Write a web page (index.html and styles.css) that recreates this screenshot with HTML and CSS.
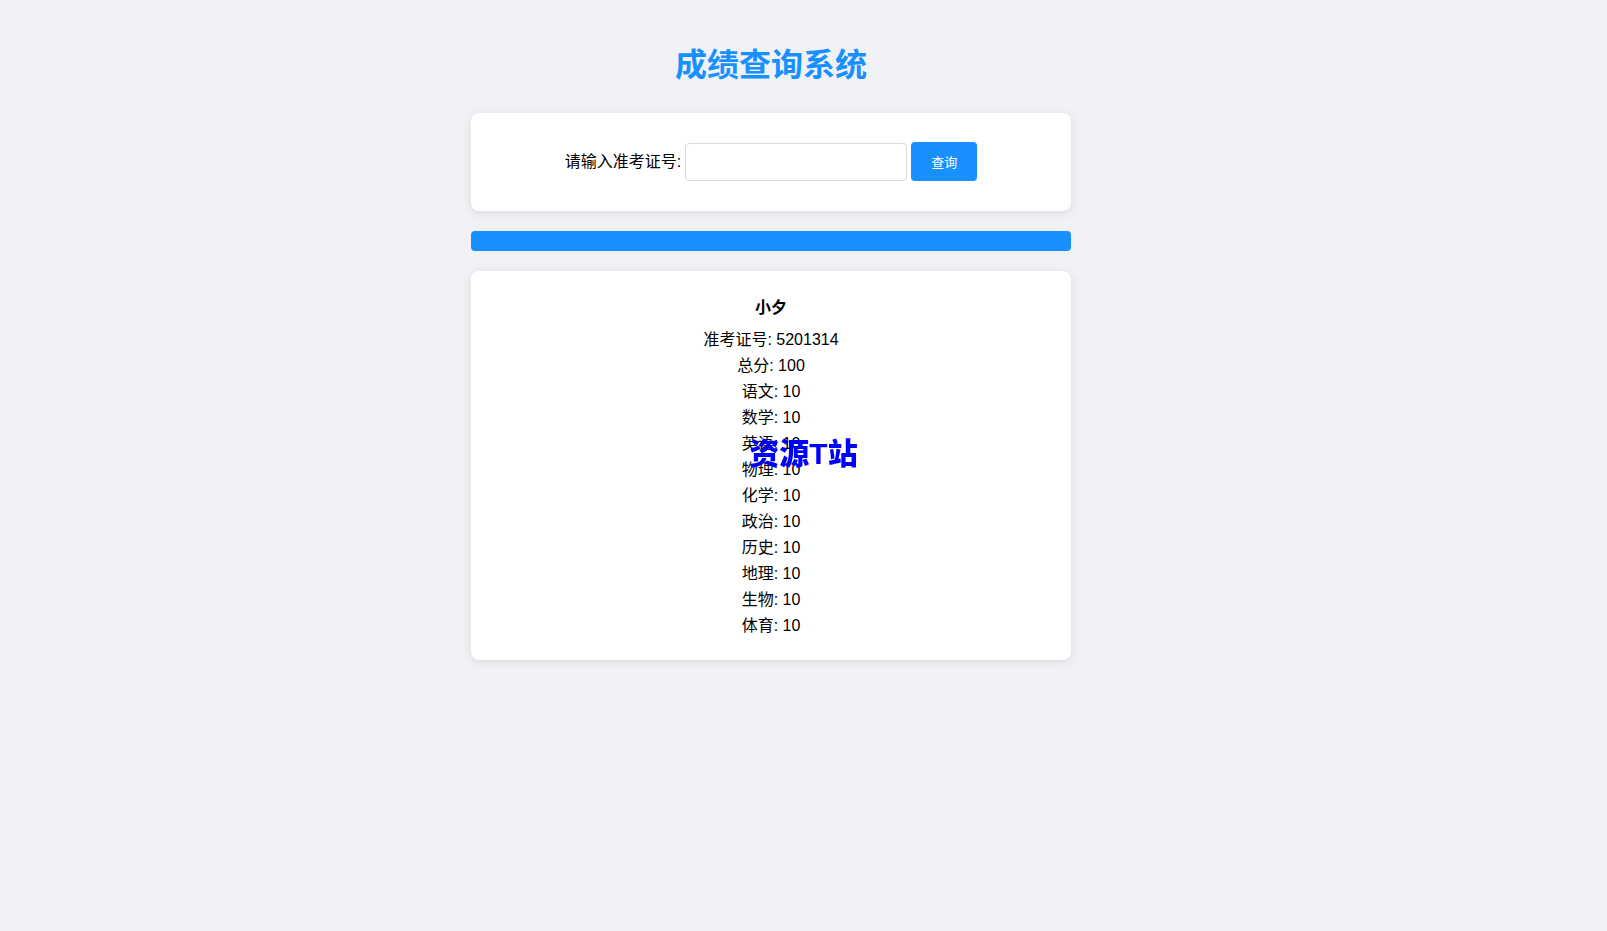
FILE: index.html
```html
<!DOCTYPE html>
<html lang="zh-CN">
<head>
  <meta charset="UTF-8">
  <meta name="viewport" content="width=device-width, initial-scale=1.0">
  <title>成绩查询系统</title>
  <link rel="stylesheet" href="styles.css">
</head>
<body>
  <div class="container">
    <h1>成绩查询系统</h1>
    <form class="card search-form">
      <label for="examId">请输入准考证号:</label>
      <input type="text" id="examId" name="examId">
      <button type="submit">查询</button>
    </form>
    <div class="bar"></div>
    <div class="card result">
      <h2 class="name">小夕</h2>
      <p>准考证号: 5201314</p>
      <p>总分: 100</p>
      <p>语文: 10</p>
      <p>数学: 10</p>
      <p>英语: 10</p>
      <p>物理: 10</p>
      <p>化学: 10</p>
      <p>政治: 10</p>
      <p>历史: 10</p>
      <p>地理: 10</p>
      <p>生物: 10</p>
      <p>体育: 10</p>
    </div>
  </div>
  <div class="watermark">资源T站</div>
</body>
</html>
```

FILE: styles.css
```css
* { box-sizing: border-box; }
body { margin: 0; padding: 44px 65px 20px 0; background: #f0f2f5; font-family: "Liberation Sans", "Noto Sans CJK SC", sans-serif; font-size: 16px; line-height: 21px; color: #000; }
.container { max-width: 600px; margin: 0 auto; text-align: center; }
h1 { margin: 0 0 27px; font-size: 32px; line-height: 42px; color: #1890ff; }
.card { background: #fff; border-radius: 8px; box-shadow: 0 2px 10px rgba(0,0,0,0.1); }
.search-form { display: flex; justify-content: center; align-items: center; gap: 4px; padding: 29px 20px 30px; }
.search-form input { width: 222px; height: 38px; padding: 10px; border: 1px solid #d9d9d9; border-radius: 4px; font-size: 13px; }
.search-form button { height: 39px; padding: 0 20px; border: none; border-radius: 4px; background: #1890ff; color: #fff; font-family: inherit; font-size: 13px; cursor: pointer; }
.search-form button:hover { background: #40a9ff; }
.bar { height: 20px; margin: 20px 0; border-radius: 4px; background: #1890ff; }
.result { padding: 26px 20px 24px; }
.result .name { margin: 0 0 11px; font-size: 16px; }
.result p { margin: 0 0 5px; }
.result p:last-child { margin-bottom: 0; }
/* site mark, stays near the middle of the window */
.watermark { position: fixed; inset: 0 0 24px; display: flex; justify-content: center; align-items: center; font-size: 30px; font-weight: 900; line-height: 40px; color: #00f; white-space: nowrap; pointer-events: none; }
```
